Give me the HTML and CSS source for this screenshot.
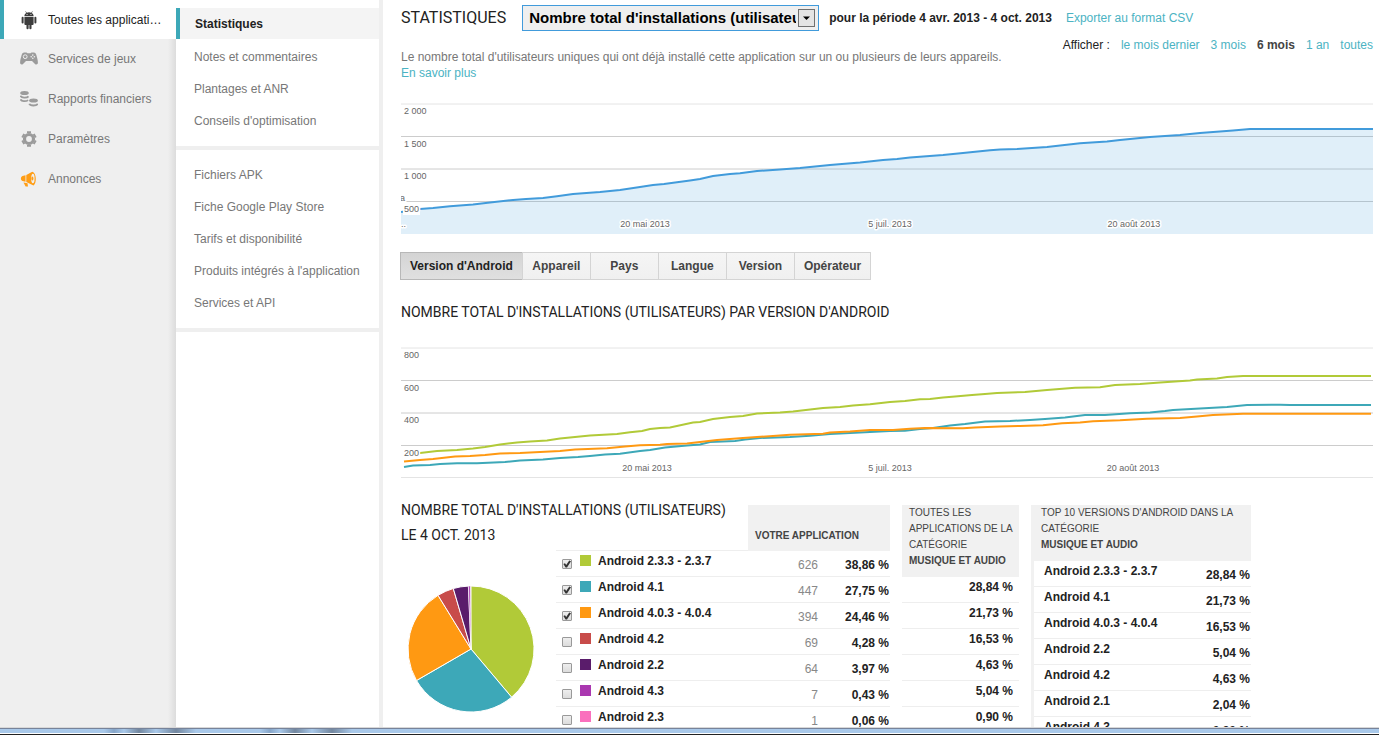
FILE: index.html
```html
<!DOCTYPE html>
<html lang="fr">
<head>
<meta charset="utf-8">
<title>Statistiques</title>
<link rel="stylesheet" href="styles.css">
</head>
<body>
<div class="app">
  <nav class="sidebar">
    <a class="side-item active" href="#">
      <svg class="icon" width="18" height="20" viewBox="-1 -1 20 22" fill="#3c3c3c"><path d="M4.800.6l1.300 1.600C4.600 3 4 4 3.900 5.500h10.200C14 4 13.400 3 11.900 2.200L13.200.6l-.5-.3L11.300 2A6 6 0 0 0 6.700 2L5.300.3z"/><path d="M3.900 6.300h10.200v8.200a1 1 0 0 1-1 1h-1.300v3.600a1.200 1.200 0 0 1-2.400 0v-3.600H8.600v3.600a1.200 1.200 0 0 1-2.400 0v-3.600H4.900a1 1 0 0 1-1-1z"/><rect x=".8" y="6.300" width="2.200" height="7.500" rx="1.100"/><rect x="15" y="6.300" width="2.200" height="7.500" rx="1.100"/><circle cx="6.800" cy="3.900" r=".6" fill="#fff"/><circle cx="11.200" cy="3.900" r=".6" fill="#fff"/></svg>
      <span>Toutes les applicati…</span>
    </a>
    <a class="side-item" href="#">
      <svg class="icon" width="18" height="20" viewBox="0 0 18 20"><path fill="#9b9b9b" d="M4.300 3.500h2.200l1 .8h3l1-.8h2.200c1.600 0 2.300 1 2.800 3 .6 2.400 1.400 4.700 1.400 7.200 0 1.700-1.800 2.200-2.900 1.200L12 12H6l-3 2.900c-1.100 1-2.900.5-2.900-1.200C.1 11.200.9 8.900 1.500 6.500c.5-2 1.200-3 2.800-3z"/><circle cx="5.200" cy="7.700" r="1.900" fill="none" stroke="#efefef"/><g fill="#efefef"><circle cx="12.800" cy="6.100" r=".8"/><circle cx="12.800" cy="9.300" r=".8"/><circle cx="11.200" cy="7.700" r=".8"/><circle cx="14.400" cy="7.700" r=".8"/></g></svg>
      <span>Services de jeux</span>
    </a>
    <a class="side-item" href="#">
      <svg class="icon" width="18" height="20" viewBox="0 0 18 20"><g fill="#9b9b9b"><ellipse cx="4.500" cy="4" rx="4.300" ry="2"/><ellipse cx="13.500" cy="11.500" rx="4.400" ry="2"/></g><g fill="none" stroke="#9b9b9b" stroke-width="1.800"><path d="M.5 6.700c.6 2.300 6.400 2.500 8 .6M.5 10.300c.6 2.200 5.500 2.500 7.600.8M9.300 14.700c.7 2.400 7.700 2.400 8.400 0"/></g></svg>
      <span>Rapports financiers</span>
    </a>
    <a class="side-item" href="#">
      <svg class="icon" width="18" height="20" viewBox="0 0 18 20"><circle cx="9" cy="10" r="4.500" fill="none" stroke="#9b9b9b" stroke-width="3.200"/><g stroke="#9b9b9b" stroke-width="4"><path d="M9 2.300v2M9 15.700v2M2.400 6.200l1.700 1M13.900 12.800l1.700 1M2.400 13.800l1.700-1M13.900 7.200l1.700-1"/></g></svg>
      <span>Paramètres</span>
    </a>
    <a class="side-item" href="#">
      <svg class="icon" width="18" height="20" viewBox="0 0 18 20"><g fill="#ff9d14"><path d="M2.500 7L5.500 6.200v6.600L2.500 12C.4 11 .4 8 2.500 7zM6.300 6l6-3.300c4.200 1 4.700 11.500 1.200 13.800L6.300 13z"/><path d="M3.500 13.500l4 .8L8 17.500H5.600z"/></g><ellipse cx="12.900" cy="9.500" rx="1.700" ry="4.800" fill="#efefef"/><ellipse cx="12.400" cy="9.500" rx="1" ry="2" fill="#ff9d14"/></svg>
      <span>Annonces</span>
    </a>
  </nav>

  <nav class="subnav">
    <div class="sub-group">
      <a class="sub-item current" href="#">Statistiques</a>
      <a class="sub-item" href="#">Notes et commentaires</a>
      <a class="sub-item" href="#">Plantages et ANR</a>
      <a class="sub-item" href="#">Conseils d'optimisation</a>
    </div>
    <div class="sub-group">
      <a class="sub-item" href="#">Fichiers APK</a>
      <a class="sub-item" href="#">Fiche Google Play Store</a>
      <a class="sub-item" href="#">Tarifs et disponibilité</a>
      <a class="sub-item" href="#">Produits intégrés à l'application</a>
      <a class="sub-item" href="#">Services et API</a>
    </div>
  </nav>

  <main class="main">
    <header class="head">
      <h1>STATISTIQUES</h1>
      <div class="metric">
        <select class="metric-select" aria-label="Statistique">
          <option>Nombre total d'installations (utilisateurs)</option>
        </select>
        <svg class="metric-arrow" width="17" height="18" viewBox="0 0 17 18"><rect x=".5" y=".5" width="16" height="17" fill="#e4e4e4" stroke="#707070"/><path d="M5 7.500h7L8.500 11z"/></svg>
      </div>
      <strong class="period">pour la période 4 avr. 2013 - 4 oct. 2013</strong>
      <a class="link" href="#">Exporter au format CSV</a>
    </header>

    <div class="intro">
      <p class="description">Le nombre total d'utilisateurs uniques qui ont déjà installé cette application sur un ou plusieurs de leurs appareils.<br><a class="link" href="#">En savoir plus</a></p>
      <div class="ranges">
        <span>Afficher :</span>
        <a class="link" href="#">le mois dernier</a>
        <a class="link" href="#">3 mois</a>
        <strong>6 mois</strong>
        <a class="link" href="#">1 an</a>
        <a class="link" href="#">toutes</a>
      </div>
    </div>

    <svg class="chart" role="img" aria-label="Nombre total d'installations">
      <svg width="100%" height="131" viewBox="401 103 972 131" preserveAspectRatio="none">
        <path class="grid-line light" d="M401 104H1373"/>
        <path class="grid-line" d="M401 136.500H1373M401 169H1373M401 201.500H1373"/>
        <path fill="#419bdb" fill-opacity=".16" d="M401 212L420 209 433 208 450 206.300 473 204.500 490 202.500 513 200 526 199 543 198 557 196.300 573 194 600 192 620 190 640 187 653 185 664 184 690 180.500 700 179 713 176 730 174 740 173.300 757 171 780 169.500 800 168 830 165 860 162.500 883 160 897 159 910 157.500 943 155 963 153 990 150.300 1000 149.500 1017 149 1047 147 1080 143.300 1107 141.500 1120 140 1150 137 1180 135 1200 133 1233 130.500 1250 129H1373V234H401z"/>
        <path class="series" stroke="#419bdb" d="M401 212L420 209 433 208 450 206.300 473 204.500 490 202.500 513 200 526 199 543 198 557 196.300 573 194 600 192 620 190 640 187 653 185 664 184 690 180.500 700 179 713 176 730 174 740 173.300 757 171 780 169.500 800 168 830 165 860 162.500 883 160 897 159 910 157.500 943 155 963 153 990 150.300 1000 149.500 1017 149 1047 147 1080 143.300 1107 141.500 1120 140 1150 137 1180 135 1200 133 1233 130.500 1250 129H1373"/>
      </svg>
      <rect x="2" y="99" width="17" height="13" fill="#fff"/>
      <g class="axis halo">
        <text x="3" y="11">2 000</text><text x="3" y="44">1 500</text><text x="3" y="76">1 000</text><text x="3" y="109">500</text>
        <text x="-1" y="98">a</text><text x="0" y="124">..</text>
        <text x="25.100%" y="124" text-anchor="middle">20 mai 2013</text><text x="50.300%" y="124" text-anchor="middle">5 juil. 2013</text><text x="75.400%" y="124" text-anchor="middle">20 août 2013</text>
      </g>
    </svg>

    <div class="tabs">
      <button class="tab selected" type="button">Version d'Android</button>
      <button class="tab" type="button">Appareil</button>
      <button class="tab" type="button">Pays</button>
      <button class="tab" type="button">Langue</button>
      <button class="tab" type="button">Version</button>
      <button class="tab" type="button">Opérateur</button>
    </div>

    <h2 class="section-title">NOMBRE TOTAL D'INSTALLATIONS (UTILISATEURS) PAR VERSION D'ANDROID</h2>

    <svg class="chart" role="img" aria-label="Installations par version d'Android">
      <svg width="100%" height="131" viewBox="401 347 972 131" preserveAspectRatio="none">
        <path class="grid-line light" d="M401 348H1373M401 477.500H1373"/>
        <path class="grid-line" d="M401 380.500H1373M401 413H1373M401 445.500H1373"/>
        <path class="series" stroke="#b1ca38" d="M404 454.500L420 453 437 451 457 450 473 448.500 485 447 500 444.500 517 442.500 530 441.500 547 440.500 560 438.500 570 437.500 590 435.500 617 434 630 432.300 642 431 650 429 660 428 670 427.500 693 422.500 700 422 713 419 730 417 743 416 757 413.500 780 412.500 793 411.500 823 408 840 407 853 405.500 870 404.200 890 402 905 401 920 399.300 930 399 943 397.500 955 396.500 972 395 985 394 997 393 1025 392 1047 390 1075 387.700 1100 387.300 1115 385 1140 384 1160 382.500 1190 380.500 1197 379.500 1217 378.500 1227 377 1243 376H1371"/>
        <path class="series" stroke="#3da8b8" d="M404 467L413 465.500 430 465 440 464 457 463.300 477 463.300 505 462 520 460.500 543 459.500 560 458 578 457 590 456 605 454.500 620 453.700 640 451 650 450 665 447.500 687 445.500 700 444.500 710 442 735 441 745 439.500 760 438 790 437 810 435.800 830 434 855 432.700 870 432 890 431 905 430.700 920 429 933 428 950 425.500 965 424 985 421.500 1010 421 1030 420 1045 419 1065 417.500 1085 415 1105 415 1130 413.300 1150 412.500 1165 411 1173 410 1200 408.500 1227 407 1247 405 1280 404.700 1290 405H1371"/>
        <path class="series" stroke="#ff9912" d="M404 461.500L420 460 433 459 455 456.500 470 456 485 455 500 453.500 520 453 560 451 575 449.500 607 448.300 625 446.500 640 445.300 660 444.700 667 444 687 443.500 700 442 717 440 730 439 743 438 757 437 773 436 790 434.800 823 433.800 830 432.500 850 431.500 870 430 893 430 910 428.800 925 428 963 428.300 975 427.500 1000 426.500 1020 426 1043 425.300 1062 423.200 1080 422.500 1093 421.300 1120 420.300 1147 418.700 1180 418 1197 416.500 1213 415 1243 413.700H1371"/>
      </svg>
      <rect x="2" y="99" width="17" height="12" fill="#fff"/>
      <g class="axis halo">
        <text x="3" y="11">800</text><text x="3" y="44">600</text><text x="3" y="76">400</text><text x="3" y="109">200</text>
        <text x="25.300%" y="124" text-anchor="middle">20 mai 2013</text><text x="50.300%" y="124" text-anchor="middle">5 juil. 2013</text><text x="75.300%" y="124" text-anchor="middle">20 août 2013</text>
      </g>
    </svg>

    <div class="tables">
      <table class="table own">
        <colgroup><col class="c-pie"><col class="c-name"><col class="c-count"><col class="c-share"></colgroup>
        <thead>
          <tr><th colspan="2" class="own-title">NOMBRE TOTAL D'INSTALLATIONS (UTILISATEURS)<br>LE 4 OCT. 2013</th><th colspan="2" class="own-app"><div><b>VOTRE APPLICATION</b></div></th></tr>
        </thead>
        <tbody>
          <tr>
            <td rowspan="7" class="pie-cell">
              <svg class="pie" width="128" height="128" viewBox="-64 -64 128 128" stroke="#fff" stroke-width="1"><path fill="#b1ca38" d="M0 0V-63A63 63 0 0 1 40.600 48.200z"/><path fill="#3da8b8" d="M0 0L40.600 48.200A63 63 0 0 1-54.500 31.500z"/><path fill="#ff9912" d="M0 0L-54.500 31.500A63 63 0 0 1-33-53.700z"/><path fill="#c84c4a" d="M0 0L-33-53.700A63 63 0 0 1-17.700-60.500z"/><path fill="#5a1c6b" d="M0 0L-17.700-60.500A63 63 0 0 1-2.600-62.900z"/><path fill="#aa38b0" stroke-width=".6" d="M0 0L-2.600-62.900A63 63 0 0 1-.7-63z"/></svg>
            </td>
            <td class="name"><label><input type="checkbox" checked><i class="swatch lime"></i>Android 2.3.3 - 2.3.7</label></td><td class="count">626</td><td class="share">38,86 %</td>
          </tr>
          <tr><td class="name"><label><input type="checkbox" checked><i class="swatch teal"></i>Android 4.1</label></td><td class="count">447</td><td class="share">27,75 %</td></tr>
          <tr><td class="name"><label><input type="checkbox" checked><i class="swatch orange"></i>Android 4.0.3 - 4.0.4</label></td><td class="count">394</td><td class="share">24,46 %</td></tr>
          <tr><td class="name"><label><input type="checkbox"><i class="swatch red"></i>Android 4.2</label></td><td class="count">69</td><td class="share">4,28 %</td></tr>
          <tr><td class="name"><label><input type="checkbox"><i class="swatch plum"></i>Android 2.2</label></td><td class="count">64</td><td class="share">3,97 %</td></tr>
          <tr><td class="name"><label><input type="checkbox"><i class="swatch violet"></i>Android 4.3</label></td><td class="count">7</td><td class="share">0,43 %</td></tr>
          <tr><td class="name"><label><input type="checkbox"><i class="swatch pink"></i>Android 2.3</label></td><td class="count">1</td><td class="share">0,06 %</td></tr>
        </tbody>
      </table>

      <table class="table category">
        <thead><tr><th>TOUTES LES<br>APPLICATIONS DE LA<br>CATÉGORIE<br><b>MUSIQUE ET AUDIO</b></th></tr></thead>
        <tbody>
          <tr><td>28,84 %</td></tr>
          <tr><td>21,73 %</td></tr>
          <tr><td>16,53 %</td></tr>
          <tr><td>4,63 %</td></tr>
          <tr><td>5,04 %</td></tr>
          <tr><td>0,90 %</td></tr>
        </tbody>
      </table>

      <table class="table top">
        <thead><tr><th colspan="2">TOP 10 VERSIONS D'ANDROID DANS LA<br>CATÉGORIE<br><b>MUSIQUE ET AUDIO</b></th></tr></thead>
        <tbody>
          <tr><td class="name">Android 2.3.3 - 2.3.7</td><td class="share">28,84 %</td></tr>
          <tr><td class="name">Android 4.1</td><td class="share">21,73 %</td></tr>
          <tr><td class="name">Android 4.0.3 - 4.0.4</td><td class="share">16,53 %</td></tr>
          <tr><td class="name">Android 2.2</td><td class="share">5,04 %</td></tr>
          <tr><td class="name">Android 4.2</td><td class="share">4,63 %</td></tr>
          <tr><td class="name">Android 2.1</td><td class="share">2,04 %</td></tr>
          <tr><td class="name">Android 4.3</td><td class="share">0,90 %</td></tr>
        </tbody>
      </table>
    </div>
  </main>
</div>
<div class="window-edge"><span class="smudge"></span><span class="smudge"></span></div>
</body>
</html>
```
FILE: styles.css
```css
* { box-sizing: border-box; }

body {
  margin: 0;
  height: 100vh;
  display: flex;
  flex-direction: column;
  overflow: hidden;
  font: 12px/16px "Liberation Sans", Arial, sans-serif;
  color: #222;
  background: #fff;
}

a { text-decoration: none; }
h1, h2, p { margin: 0; font-weight: 400; }
.link { color: #4bb3c3; }

.app { flex: 1; min-height: 0; display: flex; overflow: hidden; }

.sidebar {
  flex: none;
  width: 176px;
  background: linear-gradient(to left, #dcdcdc, #efefef 8px);
}
.side-item {
  display: flex;
  align-items: center;
  height: 40px;
  padding: 0 8px 0 20px;
  gap: 10px;
  color: #777;
  white-space: nowrap;
}
.side-item.active {
  height: 39px;
  padding-left: 16px;
  border-left: 4px solid #3da8b8;
  background: #fff;
  color: #222;
}
.icon { flex: none; }

.subnav {
  flex: none;
  width: 207px;
  border-right: 4px solid #efefef;
}
.sub-group { padding: 9px 0; border-bottom: 4px solid #efefef; }
.sub-group:first-child { padding-top: 8px; }
.sub-item {
  display: flex;
  align-items: center;
  height: 32px;
  padding-left: 18px;
  color: #777;
}
.sub-item.current {
  height: 31px;
  margin-bottom: 2px;
  padding-left: 15px;
  border-left: 4px solid #3da8b8;
  background: #f4f4f4;
  color: #222;
  font-weight: 700;
}

.main { flex: 1; min-width: 0; padding: 0 6px 0 18px; overflow: hidden; }

.head { display: flex; align-items: center; height: 36px; white-space: nowrap; }
h1 { font: 400 16px/24px Roboto, sans-serif; margin-right: 16px; }
.metric { position: relative; width: 297px; }
.metric-select {
  appearance: none;
  display: block;
  width: 100%;
  height: 26px;
  padding: 0 22px 0 6px;
  border: 1px solid #419bdb;
  border-radius: 0;
  background: #efefef;
  color: #000;
  font: 700 15px/20px "Liberation Sans", Arial, sans-serif;
}
.metric-arrow { position: absolute; right: 4px; top: 4px; pointer-events: none; }
.period { margin: 0 14px 0 10px; }

.intro { display: flex; justify-content: space-between; height: 67px; }
.description { padding-top: 13px; color: #777; }
.ranges { display: flex; gap: 11px; padding-top: 1px; white-space: nowrap; }
.ranges strong { color: #444; }

.chart { display: block; width: 100%; height: 131px; }
.grid-line { stroke: #ccc; stroke-width: 1; fill: none; }
.grid-line.light { stroke: #e4e4e4; }
.series { fill: none; stroke-width: 2; vector-effect: non-scaling-stroke; }
.axis { font-size: 9px; fill: #666; }
.halo text { paint-order: stroke; stroke: #fff; stroke-width: 3px; stroke-linejoin: round; }

.tabs { display: flex; margin: 18px 0 0 -1px; }
.tab {
  min-width: 69px;
  height: 28px;
  margin: 0 0 0 -1px;
  padding: 0 9px;
  border: 1px solid #d4d4d4;
  background: linear-gradient(#f5f5f5, #f0f0f0);
  color: #444;
  font: 700 12px/16px "Liberation Sans", Arial, sans-serif;
}
.tab.selected {
  margin-left: 0;
  border-color: #b8b8b8;
  background: linear-gradient(#d4d4d4, #e0e0e0);
  color: #222;
}

.section-title { font: 400 14px/24px Roboto, sans-serif; margin: 20px 0 23px; }

.tables { display: flex; align-items: flex-start; gap: 12px; margin-top: 20px; }
.table { flex: none; border-collapse: separate; border-spacing: 0; table-layout: fixed; }
.table th {
  padding: 0 0 0 7px;
  text-align: left;
  vertical-align: top;
  font-weight: 400;
  font-size: 10px;
  line-height: 16px;
  color: #444;
  white-space: nowrap;
  background: #f1f1f1;
}
.table td {
  height: 26px;
  padding: 0;
  border-bottom: 1px solid #eee;
  font-weight: 700;
  vertical-align: top;
  white-space: nowrap;
}

.own { width: 489px; }
.c-pie { width: 155px; }
.c-name { width: 192px; }
.c-count { width: 70px; }
.c-share { width: 72px; }
.table .own-title {
  padding: 0;
  height: 52px;
  background: none;
  font: 400 14px/25px Roboto, sans-serif;
  color: #222;
}
.table .own-app { padding: 7px 0 0; background: none; }
.own-app div { height: 46px; padding: 23px 0 0 7px; background: #f1f1f1; }
.own .pie-cell { padding: 34px 0 0 6px; border: 0; }
.pie { display: block; }
.own tr:first-child .name { box-shadow: 0 -1px #eee; }
.own label { display: flex; align-items: flex-start; padding: 2px 0 0 6px; }
.own .count { padding-top: 6px; text-align: right; font-weight: 400; color: #888; }
.own .share { padding: 6px 1px 0 0; text-align: right; }

input[type="checkbox"] {
  appearance: none;
  width: 10px;
  height: 10px;
  margin: 6px 8px 0 0;
  border: 1px solid #999;
  border-radius: 1px;
  background: linear-gradient(#eee, #dcdcdc);
}
input[type="checkbox"]:checked::after {
  content: "";
  display: block;
  width: 8px;
  height: 8px;
  background: #333;
  clip-path: polygon(5% 50%, 25% 40%, 40% 62%, 78% 5%, 100% 15%, 50% 95%, 32% 95%);
}
.swatch { width: 11px; height: 11px; margin: 2px 7px 0 0; }
.lime { background: #b1ca38; }
.teal { background: #3da8b8; }
.orange { background: #ff9912; }
.red { background: #c84c4a; }
.plum { background: #5a1c6b; }
.violet { background: #aa38b0; }
.pink { background: #fa70bd; }

.category { width: 117px; margin-top: 7px; }
.category th { height: 72px; }
.category td { padding: 2px 6px 0 0; text-align: right; }

.top { width: 220px; margin-top: 7px; border-left: 3px solid #f1f1f1; }
.top th { height: 56px; }
.top .name { padding: 2px 0 0 10px; }
.top .share { padding: 6px 1px 0 0; text-align: right; }

.window-edge {
  flex: none;
  display: flex;
  gap: 64px;
  height: 8px;
  padding: 2px 0 2px 104px;
  background: linear-gradient(#d8d8d8 1px, #77839a 1px 2px, #a9c9ea 2px 6px, #fff 6px 7px, #222 7px);
}
.smudge {
  width: 92px;
  height: 4px;
  background: linear-gradient(to right, transparent, #86a5c8 10px, #a9c9ea 20px, #73879f 35px, #a9c9ea 52px, #73879f 72px, transparent);
}
```
